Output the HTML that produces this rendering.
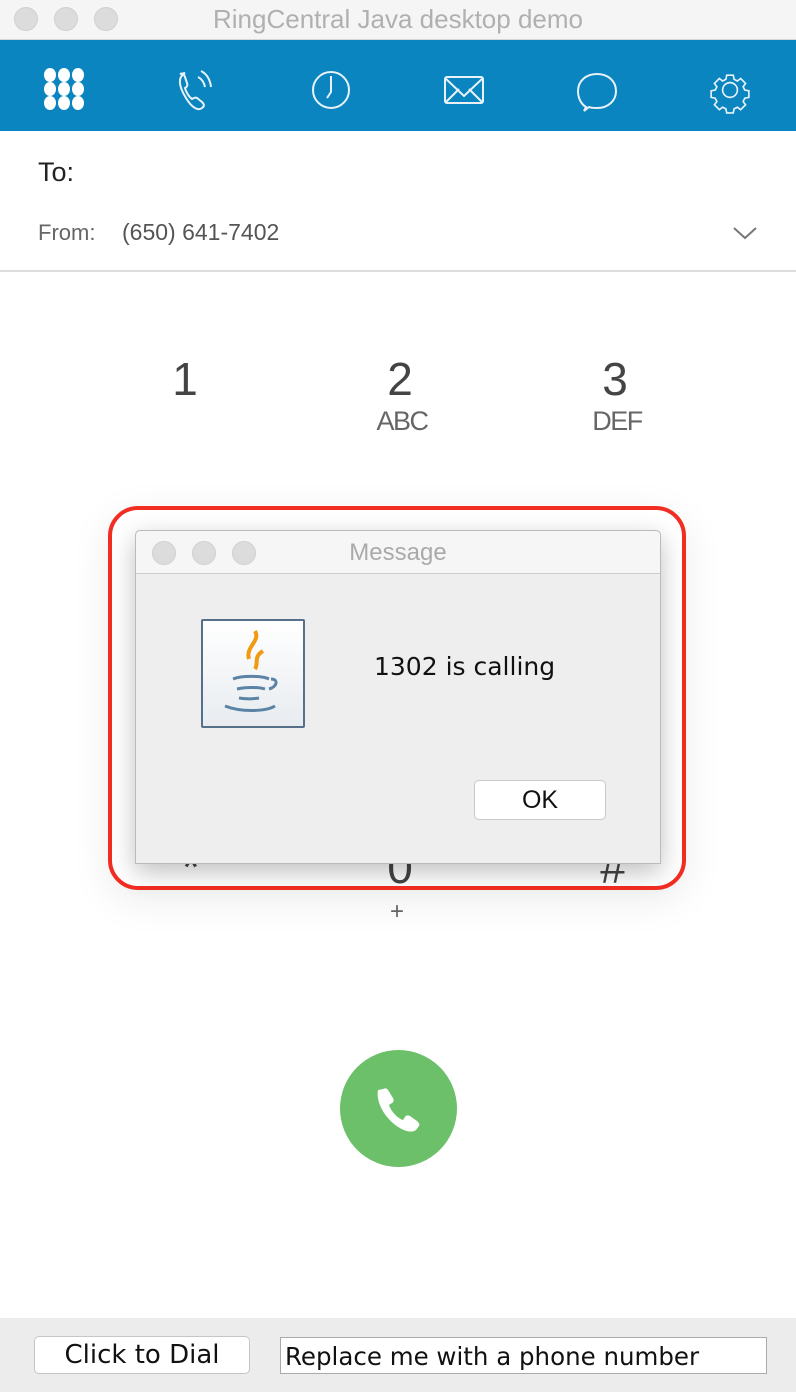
<!DOCTYPE html>
<html><head><style>
body{margin:0;width:796px;height:1392px;background:#fff;font-family:"Liberation Sans",sans-serif;position:relative;overflow:hidden}
.a{position:absolute}
.dot{position:absolute;width:24px;height:24px;border-radius:50%;background:#dcdcdc;border:1px solid #d0d0d0;box-sizing:border-box}
.dig{position:absolute;width:120px;text-align:center;font-size:46px;color:#444}
.sub{position:absolute;width:120px;text-align:center;font-size:27px;color:#666;letter-spacing:-1.5px}
</style></head><body>
<div class="a" style="left:0;top:0;width:796px;height:39px;background:#f5f5f5;border-bottom:1px solid #d6d6d6"></div>
<div class="dot" style="left:14px;top:7px"></div><div class="dot" style="left:54px;top:7px"></div><div class="dot" style="left:94px;top:7px"></div>
<div class="a" style="left:0;top:4px;width:796px;text-align:center;font-size:26px;color:#b0b0b0">RingCentral Java desktop demo</div>
<div class="a" style="left:0;top:40px;width:796px;height:91px;background:#0a85c0"></div>
<svg class="a" style="left:0;top:40px" width="796" height="91" fill="none" stroke="#e8f2f8" stroke-width="2">
<g fill="#fff" stroke="none">
<ellipse cx="50" cy="35" rx="6" ry="7"/><ellipse cx="64" cy="35" rx="6" ry="7"/><ellipse cx="78" cy="35" rx="6" ry="7"/>
<ellipse cx="50" cy="49" rx="6" ry="7"/><ellipse cx="64" cy="49" rx="6" ry="7"/><ellipse cx="78" cy="49" rx="6" ry="7"/>
<ellipse cx="50" cy="63" rx="6" ry="7"/><ellipse cx="64" cy="63" rx="6" ry="7"/><ellipse cx="78" cy="63" rx="6" ry="7"/></g>
<path d="M185 33c-7 4-7 12 1 25 6 10 12 13 16 10 3-2 2-4 0-6l-5-4c-2-1-3 0-5 1-3-2-6-7-7-11 2-1 3-3 2-5l-2-6c-1-3-3-4-5-3 z"/>
<path d="M198 37c4 2 6 5 7 10M201 31c6 3 9 8 10 16"/>
<ellipse cx="331" cy="50" rx="18" ry="18"/><path d="M331 36v16l-4 6"/>
<rect x="445" y="37" width="38" height="26" rx="2"/><path d="M445 38l19 18 19-18M445 63l14-14M483 63l-14-14"/>
<path d="M586 67c-5-3-8-9-8-16 0-10 8-17 19-17s19 7 19 17-8 17-19 17c-3 0-6 0-8-1l-5 4z"/>
<g transform="translate(730 50) scale(0.82) translate(-728 -50)"><path d="M724 32h8l1 5 4 2 4-3 6 6-3 4 2 4 5 1v8l-5 1-2 4 3 4-6 6-4-3-4 2-1 5h-8l-1-5-4-2-4 3-6-6 3-4-2-4-5-1v-8l5-1 2-4-3-4 6-6 4 3 4-2z"/><circle cx="728" cy="50" r="9"/></g>
</svg>
<div class="a" style="left:38px;top:157px;font-size:27px;color:#222">To:</div>
<div class="a" style="left:38px;top:220px;font-size:22px;color:#666">From:</div>
<div class="a" style="left:122px;top:219px;font-size:23px;color:#555">(650) 641-7402</div>
<svg class="a" style="left:732px;top:225px" width="26" height="16"><path d="M2 3l11 10 11-10" stroke="#777" stroke-width="2" fill="none"/></svg>
<div class="a" style="left:0;top:270px;width:796px;height:2px;background:#ddd"></div>
<div class="dig" style="left:125px;top:352px">1</div>
<div class="dig" style="left:340px;top:352px">2</div><div class="sub" style="left:342px;top:406px">ABC</div>
<div class="dig" style="left:555px;top:352px">3</div><div class="sub" style="left:557px;top:406px">DEF</div>
<div class="dig" style="left:131px;top:840px">*</div>
<div class="dig" style="left:340px;top:840px">0</div><div class="a" style="left:390px;top:898px;font-size:24px;color:#666">+</div>
<div class="dig" style="left:553px;top:840px">#</div>
<div class="a" style="left:108px;top:506px;width:578px;height:384px;border:4px solid #f22d22;border-radius:30px;box-sizing:border-box;box-shadow:0 10px 40px rgba(0,0,0,.08)"></div>
<div class="a" style="left:135px;top:530px;width:526px;height:334px;background:#eeeeee;border:1px solid #bbb;border-radius:5px 5px 0 0;box-sizing:border-box;box-shadow:0 8px 25px rgba(0,0,0,.25)">
<div style="height:42px;background:#f6f6f6;border-bottom:1px solid #ccc;border-radius:5px 5px 0 0;text-align:center;font-size:24px;color:#aaa;line-height:44px">Message</div>
<div class="dot" style="left:16px;top:10px"></div><div class="dot" style="left:56px;top:10px"></div><div class="dot" style="left:96px;top:10px"></div>
<div class="a" style="left:65px;top:88px;width:100px;height:105px;border:2px solid #56708a;border-radius:2px;background:linear-gradient(#fff,#e8ecf0)">
<svg width="100" height="105"><path d="M52 10c6 10-10 16-6 28M60 30c-10 6-4 12-8 18" stroke="#f09a10" stroke-width="4" fill="none"/>
<g stroke="#5b83a6" stroke-width="3" fill="none"><path d="M30 58c10-4 30-3 36 0M34 68c8-2 22-2 28 0M36 77c6 1 14 1 20 0M22 85c15 6 40 6 50 0M68 58c8 0 6 8-2 10"/></g></svg></div>
<div class="a" style="left:238px;top:121px;font-size:25px;color:#111;font-family:'DejaVu Sans',sans-serif">1302 is calling</div>
<div class="a" style="left:338px;top:249px;width:130px;height:38px;background:#fff;border:1px solid #c8c8c8;border-radius:5px;text-align:center;font-size:25px;line-height:38px;color:#111">OK</div>
</div>
<div class="a" style="left:340px;top:1050px;width:117px;height:117px;border-radius:50%;background:#6cc06a"></div>
<svg class="a" style="left:372px;top:1082px" width="54" height="54"><path d="M6 8c-2 10 4 24 16 34 10 8 18 9 22 6l3-4c1-2 0-3-2-5l-7-5c-2-1-4-1-5 1l-2 3c-6-2-12-9-14-15l3-2c2-1 2-3 1-5l-5-8c-1-2-3-2-5-1z" fill="#fff"/></svg>
<div class="a" style="left:0;top:1318px;width:796px;height:74px;background:#ececec"></div>
<div class="a" style="left:34px;top:1336px;width:216px;height:38px;background:#fff;border:1px solid #c6c6c6;border-radius:5px;box-sizing:border-box;text-align:center;font-size:26px;line-height:36px;color:#111;font-family:'DejaVu Sans',sans-serif;white-space:nowrap">Click to Dial</div>
<div class="a" style="left:280px;top:1337px;width:487px;height:37px;background:#fff;border:1px solid #aaa;box-sizing:border-box;font-size:24.5px;line-height:38px;color:#111;font-family:'DejaVu Sans',sans-serif;white-space:nowrap;padding-left:4px">Replace me with a phone number</div>
</body></html>
